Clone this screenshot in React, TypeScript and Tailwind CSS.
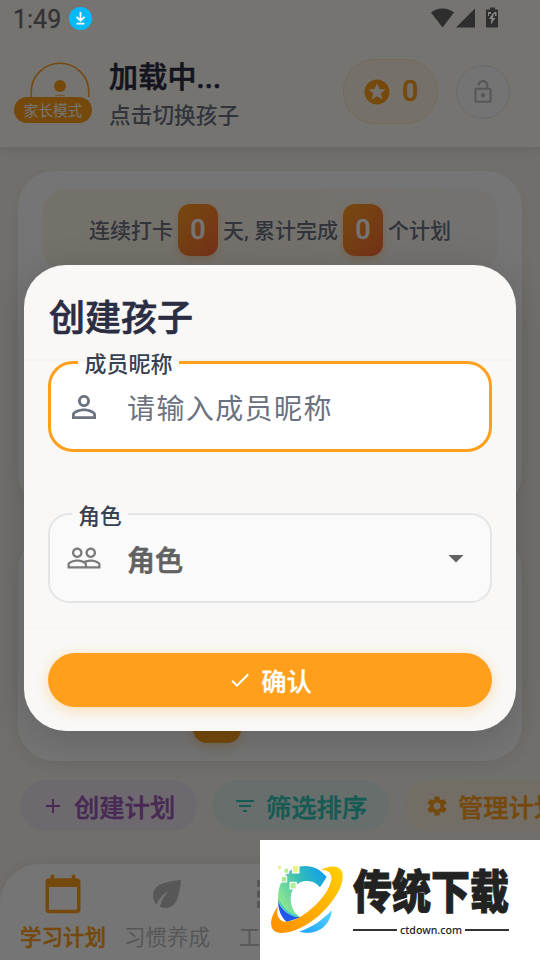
import type { ReactNode } from "react";
import {
  MdAdd,
  MdApps,
  MdArrowDropDown,
  MdCalendarToday,
  MdCheck,
  MdEco,
  MdFilterList,
  MdOutlineLockOpen,
  MdPeopleOutline,
  MdPersonOutline,
  MdSettings,
  MdStars,
} from "react-icons/md";

function StatusBar() {
  return (
    <div className="absolute inset-x-0 top-0 z-30 flex h-[38px] items-center pl-[13px] pr-[41px] text-[#333333]">
      <span className="pt-[2px] text-[25px] leading-[36px] [-webkit-text-stroke:0.3px]">1:49</span>
      <svg className="-mt-[1px] ml-[8px]" width="23" height="23" viewBox="0 0 23 23">
        <circle cx="11.5" cy="11.5" r="11.5" fill="#06b9fb" />
        <path d="M11.5 5v8M7.5 9.8l4 4 4-4M7.5 16.7h8" fill="none" stroke="#fff" strokeWidth="1.8" />
      </svg>
      <svg className="-mt-[4px] ml-auto" width="70" height="22" viewBox="0 0 70 22" fill="#2e2e2e">
        <path d="M13.500 21.500L2 6.500C8.500 1 18.500 1 25 6.500z" />
        <path d="M46 2.500v19H27z" />
        <path d="M61 1.500h5v2h2q1 0 1 1v16q0 1-1 1H58q-1 0-1-1v-16q0-1 1-1h3z" />
        <path d="M64 7l-4 6h2.500l-1 6 5-7H64l1-5zM59 6h3v2h-2v2h-1zM67.500 6H65v2h1v2h1.500z" fill="#858585" />
      </svg>
    </div>
  );
}

function Header() {
  return (
    <header className="flex h-[147px] shrink-0 bg-[#fffdf6] pl-[14px] pr-[30px] pt-[57px] shadow-[0_3px_12px_rgba(0,0,0,0.09)]">
      <div className="flex w-[78px] flex-col items-center pt-[5px]">
        <svg className="ml-[14px]" width="60" height="35" viewBox="0 0 60 35">
          <path d="M1.200 35v-5a28.800 28.800 0 0 1 57.600 0v7" fill="#fffdf6" stroke="#ff9f1c" strokeWidth="1.500" />
          <circle cx="30" cy="24" r="6" fill="#ff9f1c" />
          <path d="M25 33.800q5-1.200 10 0" fill="none" stroke="#ff9f1c" strokeWidth="0.800" />
        </svg>
        <span className="flex h-[26px] w-[78px] items-center justify-center rounded-full bg-[#ff9f1c] pt-[3px] text-[14.600px] leading-none text-white">
          家长模式
        </span>
      </div>
      <div className="ml-[17px] flex flex-col pt-[1px]">
        <span className="h-[40px] text-[29px] font-medium leading-[40px] tracking-[0.200px] text-[#2b2d42] [-webkit-text-stroke:0.6px]">加载中...</span>
        <span className="h-[36px] text-[21.700px] font-medium leading-[36px] text-[#6b7280]">点击切换孩子</span>
      </div>
      <div className="ml-auto mt-[2px] flex h-[65px] w-[95px] items-center rounded-[32px] border border-[#ffe4c4] bg-[#fff6e8] pl-[18px]">
        <MdStars size={30} className="text-[#ff9f1c]" />
        <span className="ml-[10px] text-[29px] font-medium leading-none text-[#ff9f1c] [-webkit-text-stroke:0.4px]">0</span>
      </div>
      <div className="ml-[18px] mt-[8px] flex h-[54px] w-[54px] items-center justify-center rounded-full border border-[#e8e8ec] bg-[#fcfcfc] text-[#bdbdbd]">
        <MdOutlineLockOpen size={26} />
      </div>
    </header>
  );
}

function CountBox() {
  return (
    <span className="flex h-[52px] w-[40px] items-center justify-center rounded-[12px] bg-linear-to-br from-[#ff9f1c] to-[#ff6b35] pt-[1px] text-[27px] font-medium text-white shadow-[0_3px_9px_rgba(255,159,28,0.3)] [-webkit-text-stroke:0.3px]">
      0
    </span>
  );
}

function Chip({ tone, icon, label }: { tone: string; icon: ReactNode; label: string }) {
  return (
    <div className={`flex h-[51px] w-[177px] shrink-0 items-center gap-[9px] rounded-full pl-[21px] ${tone}`}>
      {icon}
      <span className="whitespace-nowrap pt-[6px] text-[25.300px] font-medium [-webkit-text-stroke:0.4px]">{label}</span>
    </div>
  );
}

function NavItem({ tone, icon, label }: { tone: string; icon: ReactNode; label: string }) {
  return (
    <div className={`flex w-[104px] shrink-0 flex-col items-center ${tone}`}>
      {icon}
      <span className="mt-[5px] whitespace-nowrap text-[21.500px] leading-[36px]">{label}</span>
    </div>
  );
}

function Dialog() {
  return (
    <div className="flex h-[466px] w-[492px] flex-col overflow-hidden rounded-[42px] bg-[#f9f8f6]">
      <div className="flex h-[96px] shrink-0 items-center border-b-2 border-[#f3f4f6] pl-[25px] pt-[13px]">
        <h2 className="text-[36px] font-medium leading-none text-[#2b2d42] [-webkit-text-stroke:0.7px]">创建孩子</h2>
      </div>

      <div className="flex h-[268px] shrink-0 flex-col border-b border-[#f3f3f3] px-6">
        <div className="relative flex h-[91px] items-center rounded-[25px] border-[3px] border-[#ff9f1c] bg-white pl-[15px]">
          <span className="absolute -top-[3px] left-[27px] flex h-[3px] w-[101px] items-center justify-center bg-[#fdfdfd] text-[22px] font-medium text-[#374151]">
            <span className="relative top-[2px]">成员昵称</span>
          </span>
          <MdPersonOutline size={36} className="text-[#6b7280]" />
          <span className="ml-[25px] pt-[6px] text-[28px] tracking-[1.400px] text-[#6b7280]">请输入成员昵称</span>
        </div>

        <div className="relative mt-[61px] flex h-[90px] items-center rounded-[21px] border-2 border-[#e4e5e6] bg-[#fafafa] pl-[16px] pr-[16px] text-[#616161]">
          <span className="absolute -top-[2px] left-[22px] flex h-[2px] w-[56px] items-center justify-center bg-[#f9f9f8] text-[21.700px] font-medium text-[#374151]">
            <span className="relative top-[3px] whitespace-nowrap">角色</span>
          </span>
          <MdPeopleOutline size={36} className="text-[#7a7a7a]" />
          <span className="ml-[25px] pt-[7px] text-[28px] font-medium [-webkit-text-stroke:0.7px]">角色</span>
          <MdArrowDropDown size={36} className="ml-auto" />
        </div>
      </div>

      <div className="px-6 pt-6">
        <button className="flex h-[54px] w-full items-center justify-center gap-[9px] rounded-full bg-[#ff9f1c] text-[25.300px] font-medium text-white shadow-[0_3px_14px_rgba(255,159,28,0.32)]">
          <MdCheck size={24} />
          <span className="pt-[6px] [-webkit-text-stroke:0.3px]">确认</span>
        </button>
      </div>
    </div>
  );
}

function SiteLogo() {
  return (
    <svg className="mt-[23px]" width="75" height="73.300" viewBox="0 370 225 220">
      <defs>
        <linearGradient id="ring" x1="0" y1="0.600" x2="1" y2="0">
          <stop offset="0" stopColor="#93e98e" />
          <stop offset="0.500" stopColor="#35bcb7" />
          <stop offset="1" stopColor="#079af5" />
        </linearGradient>
        <linearGradient id="orbit" x1="0" y1="1" x2="1" y2="0">
          <stop offset="0" stopColor="#ff8d00" />
          <stop offset="1" stopColor="#ffd000" />
        </linearGradient>
        <linearGradient id="base" x1="0" y1="1" x2="1" y2="0">
          <stop offset="0" stopColor="#1ba1ff" />
          <stop offset="1" stopColor="#58d6f7" />
        </linearGradient>
      </defs>
      <path d="M85 381C118 374 148 384 170 412L150 443C137 426 118 421 100 425C70 432 58 462 63 490C67 512 78 525 92 533L50 546C24 522 18 475 29 440C40 406 60 388 85 381z" fill="url(#ring)" />
      <path d="M24 483C32 510 58 531 92 533L50 547C31 530 25 508 24 483z" fill="#2455ec" />
      <path d="M24 475C38 502 60 526 86 529L74 532C48 522 30 501 24 475z" fill="#3fc9d3" />
      <path d="M88 576C130 562 158 540 185 512C184 549 151 580 118 579C105 579 95 578 88 576z" fill="url(#base)" />
      <path d="M153 391C177 378 204 376 215 394C229 423 199 481 148 527C100 568 48 588 18 577C-5 565 0 533 24 499C18 523 24 542 42 546C71 550 119 518 150 482C178 449 190 420 181 402C175 392 164 390 153 391z" fill="url(#orbit)" />
      <g stroke="#fff" strokeWidth="7" style={{ paintOrder: "stroke" }}>
        <path d="M69 379h16v19H69z" fill="#e8f38f" />
        <path d="M43 387h11v12H43z" fill="#b8ee92" />
        <path d="M36 412h12v13H36z" fill="#a5e98d" />
        <path d="M62 430h15v16H62z" fill="#b5ef93" />
        <path d="M24 378h9v11h-9z" fill="#e5f399" />
      </g>
    </svg>
  );
}

export default function App() {
  return (
    <div className="relative flex h-[960px] w-[540px] flex-col overflow-hidden bg-[#f4f2ec] font-[Roboto,'Noto_Sans_CJK_SC',sans-serif]">
      <StatusBar />
      <Header />

      <main className="flex h-[717px] shrink-0 flex-col px-[18px] pt-6">
        <section className="h-[339px] shrink-0 rounded-[36px] bg-white px-6 pt-[18px] shadow-[0_4px_18px_rgba(0,0,0,0.05)]">
          <div className="flex h-[82px] items-center justify-center gap-[5px] whitespace-nowrap rounded-[24px] bg-linear-to-r from-[#fdf5e6] to-[#fdf8f4] text-[21px] font-medium text-[#6b7280]">
            <span className="pt-[3px]">连续打卡</span>
            <CountBox />
            <span className="pt-[3px]">天, 累计完成</span>
            <CountBox />
            <span className="pt-[3px]">个计划</span>
          </div>
        </section>
        <section className="mt-[24px] flex h-[227px] shrink-0 items-end rounded-[36px] bg-white pb-[18px] pl-[175px] shadow-[0_4px_18px_rgba(0,0,0,0.05)]">
          <div className="h-[60px] w-[48px] rounded-[14px] bg-[#ff9f1c] shadow-[0_4px_12px_rgba(255,159,28,0.3)]" />
        </section>
        <div className="mt-[19px] flex gap-[15px] pl-[2px]">
          <Chip tone="bg-[#eee4f1] text-[#9b59b6]" icon={<MdAdd size={24} />} label="创建计划" />
          <Chip tone="bg-[#e0f0ec] text-[#2ec4b6]" icon={<MdFilterList size={24} />} label="筛选排序" />
          <Chip tone="bg-[#f9eddd] text-[#ff9f1c]" icon={<MdSettings size={24} />} label="管理计划" />
        </div>
      </main>

      <nav className="flex h-[96px] shrink-0 rounded-t-[40px] bg-white pl-[11px] pt-[9px] shadow-[0_-3px_14px_rgba(0,0,0,0.05)]">
        <NavItem tone="font-medium text-[#ff9f1c] [-webkit-text-stroke:0.5px]" icon={<MdCalendarToday size={42} />} label="学习计划" />
        <NavItem tone="text-[#bdbdbd]" icon={<MdEco size={42} />} label="习惯养成" />
        <NavItem tone="text-[#bdbdbd]" icon={<MdApps size={42} />} label="工具箱" />
      </nav>

      {/* Modal scrim */}
      <div className="absolute inset-0 z-10 flex items-center justify-center bg-black/54 pt-[36px]">
        <div className="rounded-[42px] shadow-[0_8px_40px_rgba(0,0,0,0.16)]">
          <Dialog />
        </div>
      </div>

      {/* Site badge */}
      <div className="absolute bottom-0 right-0 z-20 flex h-[120px] w-[280px] bg-white pl-[10px]">
        <SiteLogo />
        <div className="ml-[8px] flex w-[156px] flex-col">
          <span className="mt-[30px] h-[46px] origin-center scale-y-[1.180] whitespace-nowrap text-[39px] font-black leading-[46px] text-[#222222] [-webkit-text-stroke:0.8px]">
            传统下载
          </span>
          <div className="mt-[7px] flex items-center gap-[3px]">
            <span className="h-[2px] flex-1 bg-[#333333]" />
            <span className="font-['Noto_Sans'] text-[10.600px] font-medium leading-[14px] text-[#222222]">ctdown.com</span>
            <span className="h-[2px] flex-1 bg-[#333333]" />
          </div>
        </div>
      </div>
    </div>
  );
}
